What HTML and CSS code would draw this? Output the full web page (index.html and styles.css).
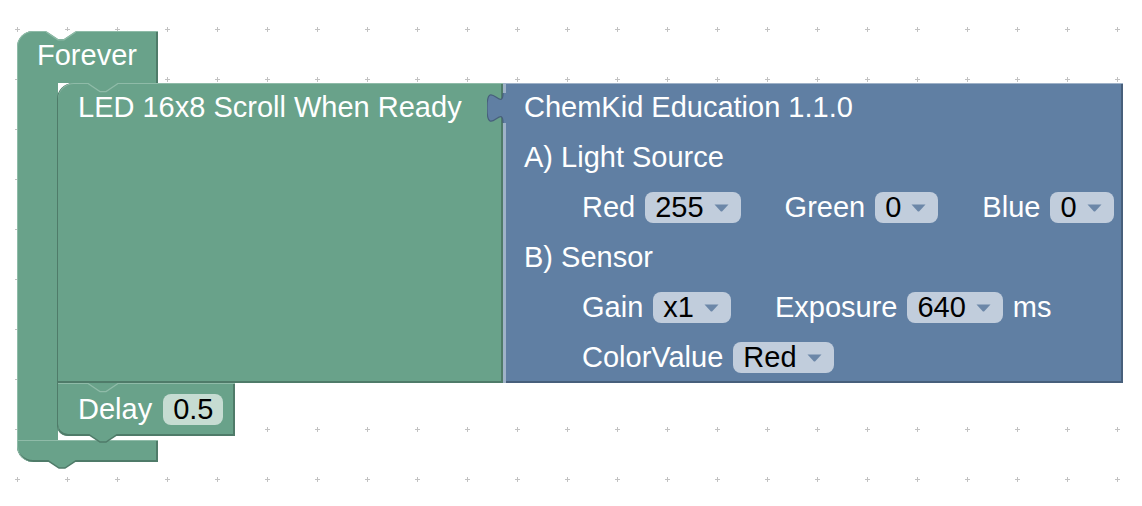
FILE: index.html
```html
<!DOCTYPE html>
<html>
<head>
<meta charset="utf-8">
<title>Blocks</title>
<link rel="stylesheet" href="styles.css">
</head>
<body>
<svg class="grid" xmlns="http://www.w3.org/2000/svg">
  <defs>
    <pattern id="dots" x="-8" y="4" width="50" height="50" patternUnits="userSpaceOnUse">
      <rect x="23" y="25" width="5" height="1" fill="#c2c2c2"/>
      <rect x="25" y="23" width="1" height="5" fill="#c2c2c2"/>
    </pattern>
  </defs>
  <rect width="100%" height="100%" fill="url(#dots)"/>
</svg>

<div class="forever">
  <div class="fv-head">
    <span class="lbl">Forever</span>
    <svg class="notch notch-top" width="30" height="10" viewBox="0 0 30 10">
      <path d="M0,0 L12,8 L18,8 L30,0 Z" fill="#ffffff"/>
      <path d="M0,0.8 L12,8.8 L18,8.8 L30,0.8" fill="none" stroke="#8fbba8" stroke-width="1.2"/>
    </svg>
  </div>
  <div class="fv-body">
    <div class="fv-arm"></div>
    <div class="fv-stack">
      <div class="stmt-row">
        <div class="block led">
          <svg class="notch notch-in" width="30" height="10" viewBox="0 0 30 10">
            <path d="M0,0 L12,8 L18,8 L30,0 Z" fill="#69a28a"/>
            <path d="M0,0.6 L12,8.6 L18,8.6 L30,0.6" fill="none" stroke="#8fbba8" stroke-width="1.2"/>
          </svg>
          <div class="row"><span class="lbl">LED 16x8 Scroll When Ready</span></div>
        </div>
        <div class="block chem">
          <svg class="tab" width="19" height="30" viewBox="0 0 19 30">
            <path d="M19,0 L16,0 C16,20 0,-16 0,15 S16,10 16,30 L19,30 Z" fill="#607fa3"/>
            <path d="M16,0 C16,20 0,-16 0,15 S16,10 16,30" fill="none" stroke="#475f7b" stroke-width="1.2"/>
          </svg>
          <div class="row"><span class="lbl">ChemKid Education 1.1.0</span></div>
          <div class="row"><span class="lbl">A) Light Source</span></div>
          <div class="row indent">
            <div class="group"><span class="lbl">Red</span><span class="dd">255<svg class="arrow" width="15" height="8" viewBox="0 0 15 8"><path d="M0.5,0.5 L14.5,0.5 L8.3,7.2 Q7.5,8 6.7,7.2 Z" fill="#6c87a8"/></svg></span></div>
            <div class="group"><span class="lbl">Green</span><span class="dd">0<svg class="arrow" width="15" height="8" viewBox="0 0 15 8"><path d="M0.5,0.5 L14.5,0.5 L8.3,7.2 Q7.5,8 6.7,7.2 Z" fill="#6c87a8"/></svg></span></div>
            <div class="group"><span class="lbl">Blue</span><span class="dd">0<svg class="arrow" width="15" height="8" viewBox="0 0 15 8"><path d="M0.5,0.5 L14.5,0.5 L8.3,7.2 Q7.5,8 6.7,7.2 Z" fill="#6c87a8"/></svg></span></div>
          </div>
          <div class="row"><span class="lbl">B) Sensor</span></div>
          <div class="row indent">
            <div class="group"><span class="lbl">Gain</span><span class="dd">x1<svg class="arrow" width="15" height="8" viewBox="0 0 15 8"><path d="M0.5,0.5 L14.5,0.5 L8.3,7.2 Q7.5,8 6.7,7.2 Z" fill="#6c87a8"/></svg></span></div>
            <div class="group"><span class="lbl">Exposure</span><span class="dd">640<svg class="arrow" width="15" height="8" viewBox="0 0 15 8"><path d="M0.5,0.5 L14.5,0.5 L8.3,7.2 Q7.5,8 6.7,7.2 Z" fill="#6c87a8"/></svg></span><span class="lbl">ms</span></div>
          </div>
          <div class="row indent">
            <div class="group"><span class="lbl">ColorValue</span><span class="dd">Red<svg class="arrow" width="15" height="8" viewBox="0 0 15 8"><path d="M0.5,0.5 L14.5,0.5 L8.3,7.2 Q7.5,8 6.7,7.2 Z" fill="#6c87a8"/></svg></span></div>
          </div>
        </div>
      </div>
      <div class="block delay">
        <svg class="notch notch-in" width="30" height="10" viewBox="0 0 30 10">
          <path d="M0,0 L12,8 L18,8 L30,0 Z" fill="#69a28a"/>
          <path d="M0,0.6 L12,8.6 L18,8.6 L30,0.6" fill="none" stroke="#8fbba8" stroke-width="1.2"/>
        </svg>
        <span class="lbl">Delay</span>
        <span class="num">0.5</span>
        <svg class="notch notch-out" width="30" height="10" viewBox="0 0 30 10">
          <path d="M0,0 L12,8 L18,8 L30,0 Z" fill="#69a28a"/>
          <path d="M0,0 L12,8 L18,8 L30,0" fill="none" stroke="#4f7b69" stroke-width="1.5"/>
        </svg>
      </div>
      <div class="stack-gap"></div>
    </div>
  </div>
  <div class="fv-foot">
    <svg class="notch notch-out" width="30" height="10" viewBox="0 0 30 10">
      <path d="M0,0 L12,8 L18,8 L30,0 Z" fill="#69a28a"/>
      <path d="M0,0 L12,8 L18,8 L30,0" fill="none" stroke="#4f7b69" stroke-width="1.5"/>
    </svg>
  </div>
</div>
</body>
</html>
```

FILE: styles.css
```css
:root {
  --g: #69a28a;
  --g-hl: #8fbba8;
  --g-sh: #4f7b69;
  --b: #607fa3;
  --b-hl: #9fb2c8;
  --b-sh: #475f7b;
}

html, body {
  margin: 0;
  padding: 0;
  width: 1142px;
  height: 506px;
  overflow: hidden;
  background: #ffffff;
}

body {
  position: relative;
  font-family: "Liberation Sans", Arial, sans-serif;
  font-size: 29px;
}

.grid {
  position: absolute;
  left: 0;
  top: 0;
  width: 100%;
  height: 100%;
}

.forever {
  position: absolute;
  left: 17px;
  top: 31px;
  display: flex;
  flex-direction: column;
  z-index: 1;
}

.lbl {
  color: #ffffff;
  white-space: nowrap;
}

.notch {
  position: absolute;
  display: block;
}

.notch-top {
  left: 29px;
  top: 0;
}

.notch-in {
  left: 30px;
  top: 0;
}

.notch-out {
  left: 30px;
  bottom: -8px;
  z-index: 2;
}

.fv-head {
  position: relative;
  width: 141px;
  height: 52px;
  box-sizing: border-box;
  background: var(--g);
  border-top-left-radius: 16px;
  display: flex;
  align-items: center;
  padding: 0 0 4px 20px;
  box-shadow: inset 0 1px 0 var(--g-hl), inset 1px 0 0 var(--g-hl), inset -2px 0 0 var(--g-sh);
}

.fv-body {
  display: flex;
}

.fv-arm {
  width: 41px;
  background: var(--g);
  box-shadow: inset 1px 0 0 var(--g-hl);
}

.fv-stack {
  display: flex;
  flex-direction: column;
  align-items: flex-start;
}

.stmt-row {
  display: flex;
}

.block {
  position: relative;
  box-sizing: border-box;
}

.led {
  width: 445px;
  height: 300px;
  background: var(--g);
  border-top-left-radius: 16px;
  padding-left: 20px;
  box-shadow: -1px 0 0 var(--g-sh), inset 0 1px 0 var(--g-hl), inset 0 -2px 0 var(--g-sh), inset -2px 0 0 var(--g-sh);
}

.row {
  box-sizing: border-box;
  height: 50px;
  padding-bottom: 2px;
  display: flex;
  align-items: center;
  gap: 44px;
}

.chem {
  width: 620px;
  height: 300px;
  background: var(--b);
  padding-left: 21px;
  box-shadow: inset 3px 0 0 var(--b-hl), inset 0 1px 0 var(--b-hl), inset 0 -2px 0 var(--b-sh), inset -2px 0 0 var(--b-sh);
}

.tab {
  position: absolute;
  left: -16px;
  top: 10px;
  display: block;
}

.indent {
  padding-left: 58px;
}

.group {
  display: flex;
  align-items: center;
  gap: 10px;
}

.dd {
  display: inline-flex;
  align-items: center;
  gap: 10px;
  height: 31px;
  line-height: 31px;
  padding: 0 12px 0 10px;
  border-radius: 8px;
  background: #c1cddc;
  color: #000000;
  white-space: nowrap;
}

.arrow {
  display: block;
  margin-top: 2px;
}

.delay {
  width: 177px;
  height: 53px;
  background: var(--g);
  display: flex;
  align-items: center;
  gap: 11px;
  padding-left: 20px;
  border-bottom-left-radius: 10px;
  box-shadow: -1px 0 0 var(--g-sh), inset 0 1px 0 var(--g-hl), inset 0 -2px 0 var(--g-sh), inset -2px 0 0 var(--g-sh);
}

.num {
  display: inline-block;
  height: 31px;
  line-height: 31px;
  padding: 0 10px;
  border-radius: 8px;
  background: #c6dcd2;
  color: #000000;
}

.stack-gap {
  height: 4px;
}

.fv-foot {
  position: relative;
  width: 141px;
  height: 22px;
  background: var(--g);
  border-bottom-left-radius: 16px;
  box-shadow: inset 0 1px 0 var(--g-hl), inset 1px 0 0 var(--g-hl), inset -2px 0 0 var(--g-sh), inset 0 -2px 0 var(--g-sh);
}
```
